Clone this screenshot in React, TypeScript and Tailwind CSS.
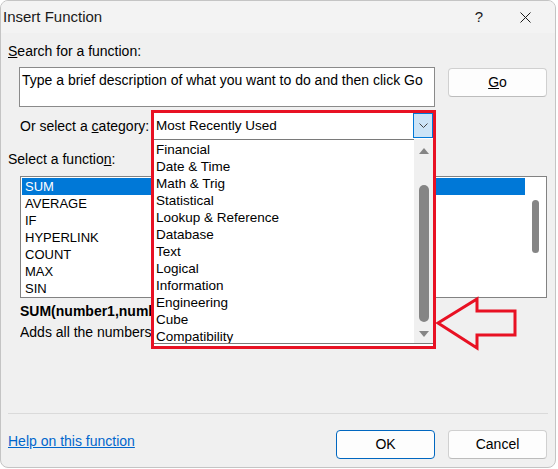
const categories = [
  "Financial",
  "Date & Time",
  "Math & Trig",
  "Statistical",
  "Lookup & Reference",
  "Database",
  "Text",
  "Logical",
  "Information",
  "Engineering",
  "Cube",
  "Compatibility",
];

const functions = ["SUM", "AVERAGE", "IF", "HYPERLINK", "COUNT", "MAX", "SIN"];

const App = () => {
  return (
    <div className="w-[558px] h-[469px] bg-white font-['Liberation_Sans',Arial,sans-serif] text-[14px] text-black overflow-hidden">
      <div className="relative flex flex-col w-[556px] h-[468px] rounded-[8px] border border-[#c4c4c4] bg-[#f0f0f0] overflow-hidden">
        {/* Title bar */}
        <div className="flex items-center h-[32px] bg-[#f3f3f3] pl-[2px] pr-[7px] shrink-0">
          <span className="text-[15px] text-[#1a1a1a]">Insert Function</span>
          <div className="ml-auto flex items-center">
            <div className="w-[46px] h-[32px] flex items-center justify-center text-[15px] text-[#1a1a1a]">?</div>
            <div className="w-[46px] h-[32px] flex items-center justify-center">
              <svg width="11" height="11" viewBox="0 0 11 11">
                <path d="M0.5 0.5 L10.5 10.5 M10.5 0.5 L0.5 10.5" stroke="#1a1a1a" strokeWidth="1" />
              </svg>
            </div>
          </div>
        </div>

        {/* Search */}
        <div className="mt-[10px] ml-[7px] h-[17px] leading-[17px]">
          <span className="underline">S</span>earch for a function:
        </div>
        <div className="flex mt-[7px] ml-[18px]">
          <div className="w-[416px] h-[40px] bg-white border border-[#8a8a8a] pl-[2px] pt-[4px] leading-[17px] whitespace-nowrap">
            Type a brief description of what you want to do and then click Go
          </div>
          <button className="ml-[13px] mt-[1px] w-[99px] h-[29px] rounded-[4px] border border-[#d0d0d0] border-b-[#bcbcbc] bg-[#fdfdfd] text-[14px]">
            <span className="underline">G</span>o
          </button>
        </div>

        {/* Category */}
        <div className="mt-[11px] ml-[19px] h-[17px] leading-[17px]">
          Or select a <span className="underline">c</span>ategory:
        </div>

        {/* Function list */}
        <div className="mt-[16px] ml-[7px] h-[17px] leading-[17px]">
          Select a functio<span className="underline">n</span>:
        </div>
        <div className="flex mt-[8px] ml-[19px] w-[527px] h-[122px] bg-white border border-[#828282] text-[13px]">
          <div className="flex-1 pt-[1px] pl-[1px]">
            {functions.map((f, i) => (
              <div
                key={f}
                className={
                  i === 0
                    ? "h-[17px] leading-[17px] pl-[3px] bg-[#0078d7] text-white"
                    : "h-[17px] leading-[17px] pl-[3px]"
                }
              >
                {f}
              </div>
            ))}
          </div>
          <div className="w-[21px] flex justify-center">
            <div className="mt-[23px] w-[7px] h-[53px] rounded-full bg-[#858585]" />
          </div>
        </div>

        {/* Description, partly covered by the open dropdown */}
        <div className="mt-[5px] ml-[19px] w-[131px] h-[17px] leading-[17px] font-bold whitespace-nowrap overflow-hidden">
          SUM(number1,number2,...)
        </div>
        <div className="mt-[4px] ml-[19px] w-[131px] h-[17px] leading-[17px] whitespace-nowrap overflow-hidden">
          Adds all the numbers in a range of cells.
        </div>

        <div className="mt-[72px] ml-[7px] w-[540px] h-[1px] bg-[#dadada]" />

        {/* Footer */}
        <div className="flex items-start mt-[16px] pl-[7px] pr-[8px]">
          <a href="#" className="mt-[3px] h-[17px] leading-[17px] text-[#0066cc] underline">
            Help on this function
          </a>
          <button className="ml-auto w-[99px] h-[29px] rounded-[4px] border border-[#0067c0] bg-[#fdfdfd] text-[14px]">
            OK
          </button>
          <button className="ml-[13px] w-[99px] h-[29px] rounded-[4px] border border-[#d0d0d0] border-b-[#bcbcbc] bg-[#fdfdfd] text-[14px]">
            Cancel
          </button>
        </div>

        {/* Open category dropdown, highlighted */}
        <div className="absolute left-[150px] top-[109px] w-[285px] h-[239px] border-[3px] border-[#e81123] bg-white flex flex-col text-[13.5px]">
          <div className="flex h-[26px] shrink-0">
            <div className="flex-1 flex items-center pl-[2px]">Most Recently Used</div>
            <div className="w-[20px] h-[25px] bg-[#cce4f7] border border-[#0078d7] flex items-center justify-center">
              <svg width="9" height="5" viewBox="0 0 9 5">
                <polyline points="0.5,0.5 4.5,4.5 8.5,0.5" fill="none" stroke="#444" strokeWidth="1" />
              </svg>
            </div>
          </div>
          <div className="flex h-[204px] shrink-0">
            <div className="flex-1 border-t border-[#7a7a7a] pt-[1px] pl-[2px] overflow-hidden">
              {categories.map((c) => (
                <div key={c} className="h-[17px] leading-[17px] whitespace-nowrap">
                  {c}
                </div>
              ))}
            </div>
            <div className="w-[19px] bg-[#f0f0f0] flex flex-col items-center">
              <svg className="mt-[9px]" width="10" height="6" viewBox="0 0 10 6">
                <polygon points="5,0 10,6 0,6" fill="#858585" />
              </svg>
              <div className="mt-[31px] w-[10px] h-[137px] rounded-full bg-[#858585]" />
              <svg className="mt-[9px]" width="10" height="6" viewBox="0 0 10 6">
                <polygon points="0,0 10,0 5,6" fill="#858585" />
              </svg>
            </div>
          </div>
          <div className="h-[1px] bg-[#7a7a7a] shrink-0" />
        </div>

        {/* Red arrow annotation */}
        <svg className="absolute left-[429px] top-[289px]" width="90" height="62" viewBox="0 0 90 62">
          <polygon
            points="8,33 47,9 47,21 85,21 85,45 47,45 47,58"
            fill="none"
            stroke="#e81123"
            strokeWidth="3"
          />
        </svg>
      </div>
    </div>
  );
};

export default App;
